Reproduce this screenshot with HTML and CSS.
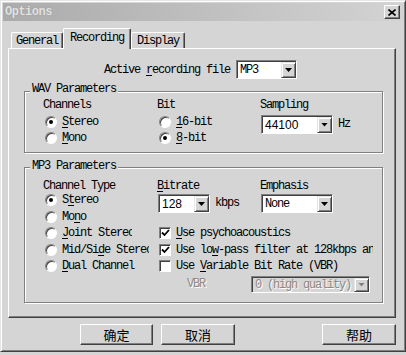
FILE: index.html
```html
<!DOCTYPE html>
<html>
<head>
<meta charset="utf-8">
<link rel="stylesheet" href="styles.css">
</head>
<body>
<div class="win">
  <div class="titlebar">
    <span class="title">Options</span>
    <span class="close"><svg width="8" height="7" viewBox="0 0 8 7"><path d="M0.5 0.5L7.5 6.5M7.5 0.5L0.5 6.5" stroke="#000" stroke-width="1.6" fill="none"/></svg></span>
  </div>
  <div class="tabs">
    <div class="tab t-gen">General</div>
    <div class="tab t-rec active">Recording</div>
    <div class="tab t-dis">Display</div>
  </div>
  <div class="panel">
    <div class="active-row">
      <span>Active <u>r</u>ecording file</span>
      <div class="combo c-mp3"><span class="val">MP3</span><span class="drop"><i></i></span></div>
    </div>
    <div class="group wav">
      <span class="legend">WAV Parameters</span>
      <div class="grid wav-grid">
        <span class="lbl">Channels</span>
        <span class="lbl">Bit</span>
        <span class="lbl">Sampling</span>
        <div class="opt"><span class="radio on"></span><span><u>S</u>tereo</span></div>
        <div class="opt"><span class="radio"></span><span><u>1</u>6-bit</span></div>
        <div class="cwrap span2"><div class="combo c-72"><span class="val num">44100</span><span class="drop"><i></i></span></div><span class="unit">Hz</span></div>
        <div class="opt"><span class="radio"></span><span><u>M</u>ono</span></div>
        <div class="opt"><span class="radio on"></span><span><u>8</u>-bit</span></div>
      </div>
    </div>
    <div class="group mp3">
      <span class="legend">MP3 Parameters</span>
      <div class="grid mp3-grid">
        <span class="lbl">Channel Type</span>
        <span class="lbl"><u>B</u>itrate</span>
        <span class="lbl">Emphasis</span>
        <div class="opt"><span class="radio on"></span><span>S<u>t</u>ereo</span></div>
        <div class="cwrap span2 c2"><div class="combo c-128"><span class="val num">128</span><span class="drop"><i></i></span></div><span class="unit">kbps</span></div>
        <div class="cwrap span2 c3"><div class="combo c-72"><span class="val">None</span><span class="drop"><i></i></span></div></div>
        <div class="opt c1"><span class="radio"></span><span>Mo<u>n</u>o</span></div>
        <div class="opt c1 clip-joint"><span class="radio"></span><span><u>J</u>oint Stereo</span></div>
        <div class="chk c23"><span class="box on"><svg width="9" height="8" viewBox="0 0 9 8"><path d="M1 3.5L3.5 6L8 1" stroke="#000" stroke-width="1.8" fill="none"/></svg></span><span><u>U</u>se psychoacoustics</span></div>
        <div class="opt c1 clip-mid"><span class="radio"></span><span>Mid/Si<u>d</u>e Stereo</span></div>
        <div class="chk c23 clip-lp"><span class="box on"><svg width="9" height="8" viewBox="0 0 9 8"><path d="M1 3.5L3.5 6L8 1" stroke="#000" stroke-width="1.8" fill="none"/></svg></span><span>Use lo<u>w</u>-pass filter at 128kbps and</span></div>
        <div class="opt c1"><span class="radio"></span><span><u>D</u>ual Channel</span></div>
        <div class="chk c23"><span class="box"></span><span>Use <u>V</u>ariable Bit Rate (VBR)</span></div>
        <div class="vbr c23"><span class="dis">VBR</span><div class="combo c-vbr disabled"><span class="val dis">0 (high quality)</span><span class="drop"><i></i></span></div></div>
      </div>
    </div>
  </div>
  <div class="buttons">
    <button class="btn b1">确定</button>
    <button class="btn b2">取消</button>
    <button class="btn b3">帮助</button>
  </div>
</div>
</body>
</html>
```
FILE: styles.css
```css
* { box-sizing: border-box; }
html, body { margin: 0; padding: 0; }
body {
  width: 406px; height: 355px; overflow: hidden;
  background: #d5d5d5;
  font: 12px/12px "Liberation Mono", monospace;
  letter-spacing: -1.2px;
  color: #000;
}
u { text-decoration: underline; text-underline-offset: 2px; }

.win {
  width: 406px; height: 352px;
  border: 1px solid; border-color: #e6e6e6 #404040 #404040 #e6e6e6;
  box-shadow: inset 1px 1px #fff, inset -1px -1px #808080;
  padding: 2px 2px 0 2px;
}
.titlebar {
  height: 18px;
  background: linear-gradient(to right, #ababab, #d3d3d3);
  display: flex; align-items: center; justify-content: space-between;
  padding: 0 3px 0 2px;
}
.title {
  font-weight: bold; letter-spacing: -0.5px; color: #e2e2e2;
  text-shadow: 0 0 1px #8a8a8a;
}
.close {
  width: 16px; height: 14px; background: #d5d5d5;
  border: 1px solid; border-color: #fff #404040 #404040 #fff;
  box-shadow: inset -1px -1px #808080;
  display: flex; align-items: center; justify-content: center;
}

.tabs { display: flex; align-items: flex-end; height: 20px; margin-top: 7px; padding-left: 8px; }
.tab {
  height: 16px; line-height: 14px; text-align: center;
  border: 1px solid; border-bottom: none;
  border-color: #fff #404040 #fff #fff;
  box-shadow: inset -1px 0 #808080;
  border-radius: 2px 2px 0 0;
  background: #d5d5d5;
  padding-top: 1px;
}
.t-gen { width: 52px; }
.t-rec { width: 68px; height: 21px; margin-bottom: -1px; position: relative; z-index: 1; line-height: 15px; padding-top: 2px; }
.t-dis { width: 54px; }

.panel {
  margin-left: 5px; width: 388px; height: 270px;
  border: 1px solid; border-color: #fff #404040 #404040 #fff;
  box-shadow: inset -1px -1px #808080;
  padding: 11px 0 0 15px;
}
.active-row { display: flex; align-items: center; padding-left: 80px; height: 19px; }
.active-row .combo { margin-left: 6px; }

.combo {
  height: 19px; display: flex; background: #fff;
  border: 1px solid; border-color: #808080 #fff #fff #808080;
  box-shadow: inset 1px 1px #404040;
  padding: 1px 0 0 1px;
}
.combo .val { flex: 1; padding-left: 2px; line-height: 16px; white-space: nowrap; overflow: hidden; }
.combo .num { font-family: "Liberation Sans", sans-serif; letter-spacing: 0; }
.combo .drop {
  width: 15px; height: 16px; background: #d5d5d5;
  border: 1px solid; border-color: #e6e6e6 #404040 #404040 #e6e6e6;
  box-shadow: inset 1px 1px #fff, inset -1px -1px #808080;
  display: flex; align-items: center; justify-content: center;
}
.combo .drop i { display: block; width: 7px; height: 4px; background: #000; clip-path: polygon(0 0, 100% 0, 50% 100%); }
.combo.disabled { background: #d5d5d5; }
.combo.disabled .drop i { background: #808080; }
.c-mp3 { width: 61px; }
.c-72 { width: 72px; }
.c-128 { width: 52px; }
.c-vbr { width: 119px; height: 17px; }
.c-vbr .val { line-height: 14px; }
.c-vbr .drop { height: 14px; }

.dis { color: #8a8a8a; text-shadow: 1px 1px #fff; }

.group {
  position: relative; width: 359px;
  border: 1px solid #808080;
  box-shadow: inset 1px 1px #fff, 1px 1px #fff;
  padding-left: 18px;
}
.legend {
  position: absolute; left: 5px; top: -9px;
  background: #d5d5d5; padding: 0 2px; line-height: 12px;
}
.wav { margin-top: 12px; height: 62px; padding-top: 5px; }
.mp3 { margin-top: 14px; height: 136px; padding-top: 10px; }
.mp3 .legend { top: -8px; }

.grid { display: grid; grid-template-columns: 114px 103px 1fr; }
.wav-grid { grid-template-rows: 13px 4.5px 15.5px 15.5px; }
.wav-grid .lbl { grid-row: 1; }
.wav-grid > :nth-child(4) { grid-row: 3; grid-column: 1; }
.wav-grid > :nth-child(5) { grid-row: 3; grid-column: 2; }
.wav-grid > :nth-child(6) { grid-row: 3 / span 2; grid-column: 3; padding-top: 0; }
.wav-grid > :nth-child(7) { grid-row: 4; grid-column: 1; }
.wav-grid > :nth-child(8) { grid-row: 4; grid-column: 2; }

.mp3-grid { grid-template-rows: 14px repeat(5, 16.5px) 19px; }
.c1 { grid-column: 1; }
.c2 { grid-column: 2; }
.c3 { grid-column: 3; }
.c23 { grid-column: 2 / span 2; }
.span2 { grid-row: span 2; }

.lbl { white-space: nowrap; padding-top: 2px; }
.opt, .chk { display: flex; align-items: center; white-space: nowrap; overflow: hidden; }
.radio {
  flex: none; width: 12px; height: 12px; margin: 0 5px 0 2px;
  border-radius: 50%; background: #fff;
  border: 1px solid; border-color: #808080 #fff #fff #808080;
  box-shadow: inset 1px 1px #404040;
  display: flex; align-items: center; justify-content: center;
}
.radio.on::after { content: ""; width: 4px; height: 4px; border-radius: 50%; background: #000; }
.clip-joint { width: 89px; }
.clip-mid { width: 106px; }
.clip-lp { width: 216px; }

.box {
  flex: none; width: 12px; height: 12px; margin: 0 5px 0 2px;
  background: #fff;
  border: 1px solid; border-color: #808080 #fff #fff #808080;
  box-shadow: inset 1px 1px #404040;
  display: flex; align-items: center; justify-content: center;
}
.cwrap { display: flex; align-items: flex-start; padding-left: 1px; padding-top: 2px; }
.unit { margin-left: 5px; line-height: 19px; }
.vbr { display: flex; align-items: center; padding-left: 30px; }
.vbr .combo { margin-left: 46px; }

.buttons { display: flex; margin-top: 6px; padding: 0 7px 0 77px; }
.btn {
  height: 21px; width: 74px; padding: 0; margin: 0;
  font: 13px/1 "Noto Sans CJK SC", sans-serif; letter-spacing: 0; color: #000;
  background: #d5d5d5;
  border: 1px solid; border-color: #fff #404040 #404040 #fff;
  box-shadow: inset -1px -1px #808080;
}
.b1 { width: 73px; }
.b2 { margin-left: 8px; }
.b3 { margin-left: auto; }
```
